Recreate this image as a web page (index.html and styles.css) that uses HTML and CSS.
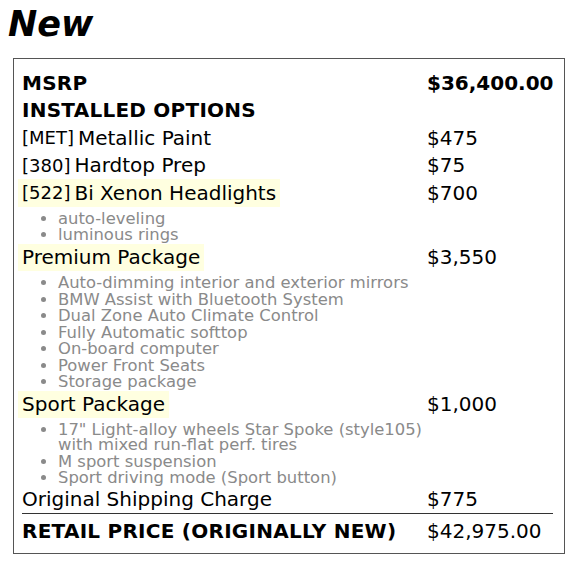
FILE: index.html
```html
<!DOCTYPE html>
<html>
<head>
<meta charset="utf-8">
<link rel="stylesheet" href="styles.css">
</head>
<body>
<h1 class="title">New</h1>
<div class="sheet">
  <div class="row"><span class="label strong">MSRP</span><span class="val strong-val">$36,400.00</span></div>
  <div class="row"><span class="label strong">INSTALLED OPTIONS</span></div>
  <div class="row"><span class="label"><span class="code">[MET]</span> Metallic Paint</span><span class="val">$475</span></div>
  <div class="row"><span class="label"><span class="code">[380]</span> Hardtop Prep</span><span class="val">$75</span></div>
  <div class="row"><span class="label"><span class="hl"><span class="code">[522]</span> Bi Xenon Headlights</span></span><span class="val">$700</span></div>
  <ul class="feats">
    <li>auto-leveling</li>
    <li>luminous rings</li>
  </ul>
  <div class="row"><span class="label"><span class="hl">Premium Package</span></span><span class="val">$3,550</span></div>
  <ul class="feats">
    <li>Auto-dimming interior and exterior mirrors</li>
    <li>BMW Assist with Bluetooth System</li>
    <li>Dual Zone Auto Climate Control</li>
    <li>Fully Automatic softtop</li>
    <li>On-board computer</li>
    <li>Power Front Seats</li>
    <li>Storage package</li>
  </ul>
  <div class="row"><span class="label"><span class="hl">Sport Package</span></span><span class="val">$1,000</span></div>
  <ul class="feats feats-end">
    <li class="narrow">17" Light-alloy wheels Star Spoke (style105) with mixed run-flat perf. tires</li>
    <li>M sport suspension</li>
    <li>Sport driving mode (Sport button)</li>
  </ul>
  <div class="row"><span class="label">Original Shipping Charge</span><span class="val">$775</span></div>
  <div class="row total"><span class="label strong">RETAIL PRICE (ORIGINALLY NEW)</span><span class="val">$42,975.00</span></div>
</div>
</body>
</html>
```
FILE: styles.css
```css
html, body {
  margin: 0;
  padding: 0;
  background: #fff;
}
body {
  font-family: "DejaVu Sans", Verdana, sans-serif;
  color: #000;
}
.title {
  margin: 0 0 14px 0;
  padding: 4px 0 0 8px;
  font-size: 35px;
  font-weight: bold;
  font-style: italic;
  line-height: 40px;
}
.sheet {
  margin: 0 8px 0 13px;
  border: 1px solid #555;
  padding: 10px 11px 8px 8px;
}
.row {
  display: grid;
  grid-template-columns: 1fr 126px;
  height: 27.5px;
  align-items: stretch;
  font-size: 20px;
}
.label, .val {
  display: flex;
  align-items: center;
  white-space: nowrap;
}
.strong {
  font-weight: bold;
  letter-spacing: 0.25px;
}
.strong-val {
  font-weight: bold;
}
.code {
  font-size: 18px;
  margin-right: 4px;
}
.hl {
  display: flex;
  align-items: center;
  height: 27.5px;
  background: #ffffe0;
  margin-left: -4px;
  padding: 0 4px;
}
.feats {
  margin: 4px 0 0 0;
  padding: 0 0 0 36px;
  font-size: 16.4px;
  line-height: 15px;
  color: #8a8a8a;
}
.feats li {
  padding-bottom: 1.5px;
}
.feats-end li:last-child {
  padding-bottom: 0;
}
.narrow {
  max-width: 372px;
}
.total {
  border-top: 1px solid #333;
  height: 32px;
  padding-top: 4.5px;
  box-sizing: border-box;
}
```
